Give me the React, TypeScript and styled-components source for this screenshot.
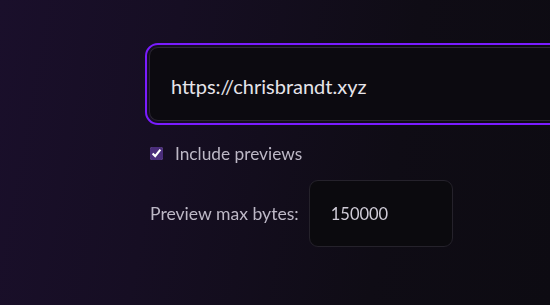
import React, { useEffect, useRef } from "react";
import styled, { createGlobalStyle } from "styled-components";

const Global = createGlobalStyle`
  html, body { margin: 0; padding: 0; }
  body {
    width: 550px;
    height: 305px;
    overflow: hidden;
    background: linear-gradient(100deg, #1a0f2b 0%, #160e23 30%, #0f0c15 70%, #0d0b12 100%);
    font-family: "Lato", "Noto Sans", sans-serif;
  }
`;

const Page = styled.div`
  box-sizing: border-box;
  width: 550px;
  padding: 43px 0 0 145px;
  display: flex;
  flex-direction: column;
  overflow: hidden;
`;

const Frame = styled.div`
  padding: 4px 0 4px 4px;
`;

const UrlInput = styled.input`
  box-sizing: border-box;
  display: block;
  width: 560px;
  height: 74px;
  border-radius: 9px;
  border: 1px solid #2c2933;
  background: #0c0a10;
  color: #e6e4ea;
  font-family: inherit;
  font-size: 20px;
  padding: 3px 0 0 21px;
  outline: 2px solid #7a1cff;
  outline-offset: 2px;
  caret-color: #ffffff;
`;

const CheckRow = styled.label`
  display: flex;
  align-items: center;
  gap: 12px;
  margin-top: 18px;
  margin-left: 5px;
  color: #bdb8c6;
  font-size: 17.3px;
  white-space: nowrap;
`;

const Check = styled.input`
  margin: 0;
  width: 13px;
  height: 13px;
  accent-color: #4a2d7a;
`;

const BytesRow = styled.div`
  display: flex;
  align-items: center;
  gap: 10px;
  margin-top: 16px;
  margin-left: 5px;
  color: #bdb8c6;
  font-size: 17.6px;
  white-space: nowrap;
`;

const NumberBox = styled.input`
  box-sizing: border-box;
  width: 144px;
  height: 67px;
  border-radius: 9px;
  border: 1px solid #25222b;
  background: #0b0a0e;
  color: #cfcbd6;
  font-family: inherit;
  font-size: 16.5px;
  padding: 0 0 0 21px;
  outline: none;
`;

export default function App() {
  const urlRef = useRef<HTMLInputElement>(null);
  useEffect(() => {
    const el = urlRef.current;
    if (el) {
      el.focus({ preventScroll: true });
      const n = el.value.length;
      el.setSelectionRange(n, n);
    }
  }, []);
  return (
    <>
      <Global />
      <Page>
        <Frame>
          <UrlInput ref={urlRef} defaultValue="https://chrisbrandt.xyz" />
        </Frame>
        <CheckRow>
          <Check type="checkbox" defaultChecked />
          Include previews
        </CheckRow>
        <BytesRow>
          <span>Preview max bytes:</span>
          <NumberBox defaultValue="150000" />
        </BytesRow>
      </Page>
    </>
  );
}
